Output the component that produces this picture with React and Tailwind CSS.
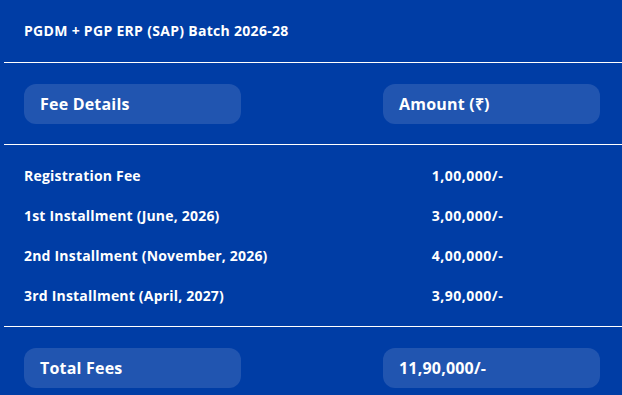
import React from 'react';

const rows = [
  { label: 'Registration Fee', amount: '1,00,000/-' },
  { label: '1st Installment (June, 2026)', amount: '3,00,000/-' },
  { label: '2nd Installment (November, 2026)', amount: '4,00,000/-' },
  { label: '3rd Installment (April, 2027)', amount: '3,90,000/-' },
];

const pillClass = 'flex h-10 w-[217px] items-center rounded-xl bg-[#2155b0] px-4 text-base font-bold tracking-[0.2px] text-white';

const App = () => {
  return (
    <main className="h-[395px] w-[622px] overflow-hidden bg-[#003da5] font-['Open_Sans',sans-serif] text-white">
      <div className="flex h-[62px] items-center px-6 text-sm font-bold tracking-[0.3px]">PGDM + PGP ERP (SAP) Batch 2026-28</div>
      <hr className="ml-1 border-t border-white" />

      <div className="flex justify-between pb-5 pl-6 pr-[22px] pt-[21px]">
        <div className={pillClass}>Fee Details</div>
        <div className={pillClass}>Amount (₹)</div>
      </div>
      <hr className="ml-1 border-t border-white" />

      <div className="ml-1 pb-[10px] pt-[11px]">
        {rows.map((row) => (
          <div key={row.label} className="grid h-10 grid-cols-2 items-center text-sm font-bold tracking-[0.2px]">
            <span className="pl-5">{row.label}</span>
            <span className="text-center tracking-[0.5px]">{row.amount}</span>
          </div>
        ))}
      </div>
      <hr className="ml-1 border-t border-white" />

      <div className="flex justify-between pl-6 pr-[22px] pt-[21px]">
        <div className={pillClass}>Total Fees</div>
        <div className={pillClass}>11,90,000/-</div>
      </div>
    </main>
  );
};

export default App;
